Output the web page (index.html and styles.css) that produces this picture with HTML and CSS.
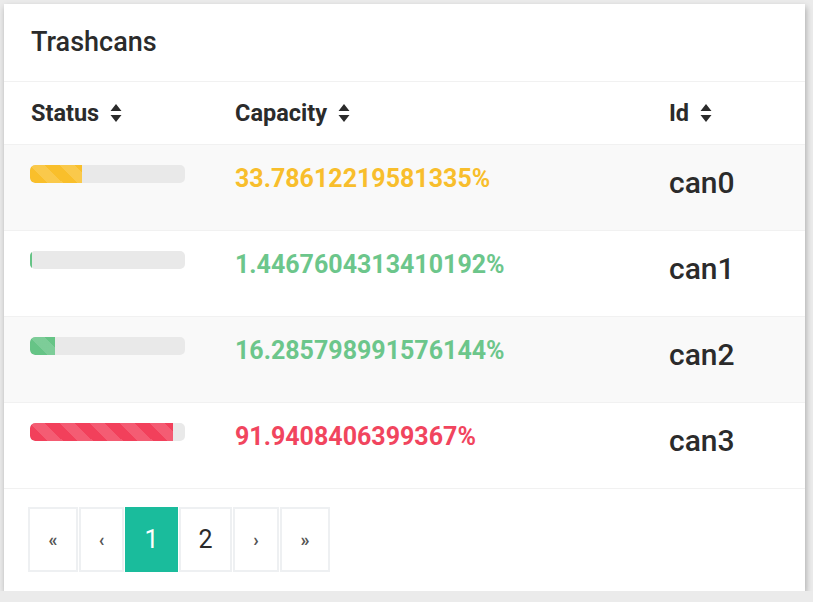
FILE: index.html
```html
<!DOCTYPE html>
<html>
<head>
<meta charset="utf-8">
<link rel="stylesheet" href="styles.css">
</head>
<body>
<div class="card">
  <div class="card-header">Trashcans</div>
  <table class="tbl">
    <colgroup><col class="c1"><col class="c2"><col class="c3"></colgroup>
    <thead>
      <tr>
        <th><span class="th-in">Status <svg class="sort" viewBox="0 0 14 22" width="14" height="22"><path d="M7 2 L12.5 9 H1.5 Z M7 20 L12.5 13 H1.5 Z" fill="#2b2b2b"/></svg></span></th>
        <th><span class="th-in">Capacity <svg class="sort" viewBox="0 0 14 22" width="14" height="22"><path d="M7 2 L12.5 9 H1.5 Z M7 20 L12.5 13 H1.5 Z" fill="#2b2b2b"/></svg></span></th>
        <th><span class="th-in">Id <svg class="sort" viewBox="0 0 14 22" width="14" height="22"><path d="M7 2 L12.5 9 H1.5 Z M7 20 L12.5 13 H1.5 Z" fill="#2b2b2b"/></svg></span></th>
      </tr>
    </thead>
    <tbody>
      <tr class="odd">
        <td><div class="track"><div class="fill yellow" style="width:33.786%"></div></div></td>
        <td class="cap t-yellow">33.78612219581335%</td>
        <td class="id">can0</td>
      </tr>
      <tr>
        <td><div class="track"><div class="fill green" style="width:1.447%"></div></div></td>
        <td class="cap t-green">1.4467604313410192%</td>
        <td class="id">can1</td>
      </tr>
      <tr class="odd">
        <td><div class="track"><div class="fill green" style="width:16.286%"></div></div></td>
        <td class="cap t-green">16.285798991576144%</td>
        <td class="id">can2</td>
      </tr>
      <tr>
        <td><div class="track"><div class="fill red" style="width:91.94%"></div></div></td>
        <td class="cap t-red">91.9408406399367%</td>
        <td class="id">can3</td>
      </tr>
    </tbody>
  </table>
  <div class="pager">
    <ul class="pagination">
      <li class="pg w50 sm">«</li>
      <li class="pg w44 sm">‹</li>
      <li class="pg w53 active">1</li>
      <li class="pg w53">2</li>
      <li class="pg w45 sm">›</li>
      <li class="pg w50 sm">»</li>
    </ul>
  </div>
</div>
</body>
</html>
```
FILE: styles.css
```css
html, body {
  margin: 0;
  padding: 0;
  background: #ebebeb;
  font-family: Roboto, "Liberation Sans", sans-serif;
  color: #2b2b2b;
}
body {
  padding: 4px 8px 0 4px;
}
.card {
  width: 801px;
  background: #fff;
  box-shadow: 1px 3px 6px rgba(0,0,0,0.28);
}
.card-header {
  height: 77px;
  border-bottom: 1px solid #f1f1f1;
  padding-left: 27px;
  font-size: 27px;
  font-weight: 500;
  line-height: 77px;
  box-sizing: content-box;
}
.tbl {
  width: 801px;
  border-collapse: collapse;
  table-layout: fixed;
}
.c1 { width: 204px; }
.c2 { width: 434px; }
.c3 { width: 163px; }
.tbl th {
  height: 62px;
  padding: 0 0 0 27px;
  text-align: left;
  font-size: 23.5px;
  font-weight: 700;
  vertical-align: middle;
}
.th-in {
  display: inline-flex;
  align-items: center;
  gap: 10px;
}
.sort { display: block; }
.tbl tbody tr {
  height: 86px;
  border-top: 1px solid #f1f1f1;
}
.tbl tbody tr:last-child { border-bottom: 1px solid #f1f1f1; }
.tbl tbody tr.odd { background: #f9f9f9; }
.tbl td {
  vertical-align: top;
  padding: 0 0 0 27px;
}
.tbl td:first-child { padding-left: 26px; padding-top: 20px; }
.track {
  width: 155px;
  height: 18px;
  border-radius: 5px;
  background: #e9e9e9;
  overflow: hidden;
}
.fill {
  height: 100%;
  border-radius: 5px 0 0 5px;
  background-size: 30px 30px;
  background-image: linear-gradient(45deg, rgba(255,255,255,.15) 25%, transparent 25%, transparent 50%, rgba(255,255,255,.15) 50%, rgba(255,255,255,.15) 75%, transparent 75%, transparent);
}
.yellow { background-color: #f9bf2b; }
.green { background-color: #66c486; }
.red { background-color: #f2405b; }
.cap {
  font-size: 25px;
  font-weight: 700;
  line-height: 30px;
  padding-top: 19px !important;
}
.t-yellow { color: #f8be2c; }
.t-green { color: #6cc68b; }
.t-red { color: #f1455e; }
.id {
  font-size: 30px;
  font-weight: 500;
  line-height: 36px;
  padding-top: 20px !important;
}
.pager {
  padding: 18px 0 19px 24px;
}
.pagination {
  display: flex;
  list-style: none;
  margin: 0;
  padding: 0;
}
.pg {
  height: 65px;
  box-sizing: border-box;
  border: 2px solid #eef0f2;
  display: flex;
  align-items: center;
  justify-content: center;
  font-size: 25px;
  color: #2b2b2b;
  margin-right: 1px;
}
.pg.sm { font-size: 18px; color: #555; font-weight: 700; }
.pg.active { background: #1abc9c; border-color: #1abc9c; color: #fff; }
.w50 { width: 50px; }
.w44 { width: 45px; }
.w53 { width: 53px; }
.w45 { width: 46px; }
```
